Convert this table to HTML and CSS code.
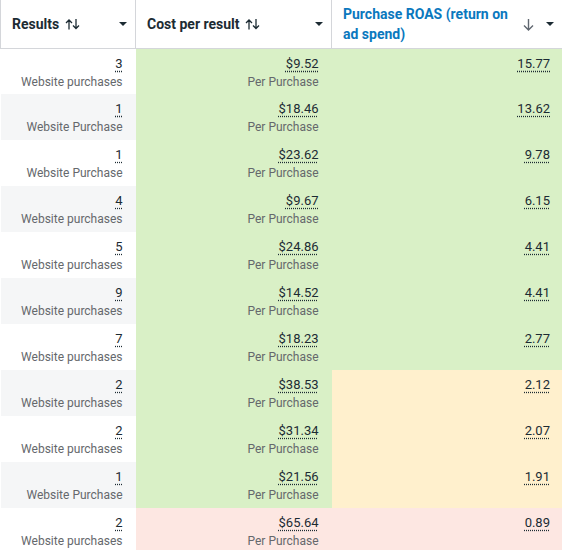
FILE: index.html
```html
<!DOCTYPE html>
<html lang="en">
  <head>
    <meta charset="UTF-8" />
    <title>Ads report</title>
    <link rel="stylesheet" href="styles.css">
  </head>
  <body>
    <table class="report" cellpadding="0" cellspacing="0">
      <tr class="head">
        <th class="col-results">
          <div class="th-in">
            <span class="label">Results
              <svg class="sort" width="15" height="11" viewBox="0 0 15 11"><path d="M4 10.5V1M1 4l3-3 3 3M11 0v9.5M8 6.5l3 3 3-3" fill="none" stroke="#1c2b33" stroke-width="1.3"/></svg>
            </span>
            <span class="caret"></span>
          </div>
        </th>
        <th class="col-cost">
          <div class="th-in">
            <span class="label">Cost per result
              <svg class="sort" width="15" height="11" viewBox="0 0 15 11"><path d="M4 10.5V1M1 4l3-3 3 3M11 0v9.5M8 6.5l3 3 3-3" fill="none" stroke="#1c2b33" stroke-width="1.3"/></svg>
            </span>
            <span class="caret"></span>
          </div>
        </th>
        <th class="col-roas">
          <div class="th-in">
            <span class="label active">Purchase ROAS (return on ad spend)</span>
            <svg class="down" width="11" height="12" viewBox="0 0 11 12"><path d="M5.5 0v11M1 6.5l4.5 4.5 4.5-4.5" fill="none" stroke="#606770" stroke-width="1.4"/></svg>
            <span class="caret"></span>
          </div>
        </th>
      </tr>
      <tr>
        <td class="res"><span class="num">3</span><span class="sub">Website purchases</span></td>
        <td class="good cost"><span class="num">$9.52</span><span class="sub">Per Purchase</span></td>
        <td class="good"><span class="num">15.77</span></td>
      </tr>
      <tr class="alt">
        <td class="res"><span class="num">1</span><span class="sub">Website Purchase</span></td>
        <td class="good cost"><span class="num">$18.46</span><span class="sub">Per Purchase</span></td>
        <td class="good"><span class="num">13.62</span></td>
      </tr>
      <tr>
        <td class="res"><span class="num">1</span><span class="sub">Website Purchase</span></td>
        <td class="good cost"><span class="num">$23.62</span><span class="sub">Per Purchase</span></td>
        <td class="good"><span class="num">9.78</span></td>
      </tr>
      <tr class="alt">
        <td class="res"><span class="num">4</span><span class="sub">Website purchases</span></td>
        <td class="good cost"><span class="num">$9.67</span><span class="sub">Per Purchase</span></td>
        <td class="good"><span class="num">6.15</span></td>
      </tr>
      <tr>
        <td class="res"><span class="num">5</span><span class="sub">Website purchases</span></td>
        <td class="good cost"><span class="num">$24.86</span><span class="sub">Per Purchase</span></td>
        <td class="good"><span class="num">4.41</span></td>
      </tr>
      <tr class="alt">
        <td class="res"><span class="num">9</span><span class="sub">Website purchases</span></td>
        <td class="good cost"><span class="num">$14.52</span><span class="sub">Per Purchase</span></td>
        <td class="good"><span class="num">4.41</span></td>
      </tr>
      <tr>
        <td class="res"><span class="num">7</span><span class="sub">Website purchases</span></td>
        <td class="good cost"><span class="num">$18.23</span><span class="sub">Per Purchase</span></td>
        <td class="good"><span class="num">2.77</span></td>
      </tr>
      <tr class="alt">
        <td class="res"><span class="num">2</span><span class="sub">Website purchases</span></td>
        <td class="good cost"><span class="num">$38.53</span><span class="sub">Per Purchase</span></td>
        <td class="warn"><span class="num">2.12</span></td>
      </tr>
      <tr>
        <td class="res"><span class="num">2</span><span class="sub">Website purchases</span></td>
        <td class="good cost"><span class="num">$31.34</span><span class="sub">Per Purchase</span></td>
        <td class="warn"><span class="num">2.07</span></td>
      </tr>
      <tr class="alt">
        <td class="res"><span class="num">1</span><span class="sub">Website Purchase</span></td>
        <td class="good cost"><span class="num">$21.56</span><span class="sub">Per Purchase</span></td>
        <td class="warn"><span class="num">1.91</span></td>
      </tr>
      <tr>
        <td class="res"><span class="num">2</span><span class="sub">Website purchases</span></td>
        <td class="bad cost"><span class="num">$65.64</span><span class="sub">Per Purchase</span></td>
        <td class="bad"><span class="num">0.89</span></td>
      </tr>
    </table>
  </body>
</html>
```

FILE: styles.css
```css
* {
  margin: 0;
  padding: 0;
  box-sizing: border-box;
}
body {
  font-family: Roboto, "Liberation Sans", sans-serif;
  color: #1c2b33;
  background: #fff;
  overflow: hidden;
}
table.report {
  width: 562px;
  border-collapse: collapse;
  table-layout: fixed;
}
.col-results {
  width: 135px;
}
.col-cost {
  width: 196px;
}
.head th {
  height: 48px;
  border-left: 1px solid #d4d6da;
  border-bottom: 1px solid #d4d6da;
  text-align: left;
  font-weight: 700;
  font-size: 14px;
  vertical-align: middle;
}
.th-in {
  display: flex;
  align-items: center;
  padding: 0 8px 0 11px;
}
.label {
  flex: 1;
  line-height: 20px;
}
.label.active {
  color: #0a78be;
  padding-right: 12px;
}
.sort {
  margin-left: 2px;
  vertical-align: -1px;
}
.down {
  margin-right: 12px;
  margin-top: 2px;
}
.caret {
  width: 0;
  height: 0;
  border-left: 4px solid transparent;
  border-right: 4px solid transparent;
  border-top: 4px solid #1c2b33;
}
td {
  height: 46px;
  text-align: right;
  vertical-align: top;
  padding: 6px 12px 0 0;
}
td.res,
td.cost {
  padding-right: 13px;
}
tr.alt td.res {
  background: #f5f6f7;
}
td.good {
  background: #d9f0c6;
}
td.warn {
  background: #fff0cd;
}
td.bad {
  background: #fde7e2;
}
.num {
  display: block;
  font-size: 13px;
  line-height: 17px;
  text-decoration: underline dotted;
  text-underline-offset: 3px;
}
.sub {
  display: block;
  margin-top: 1px;
  font-size: 12px;
  line-height: 18px;
  color: #65686c;
}
```
